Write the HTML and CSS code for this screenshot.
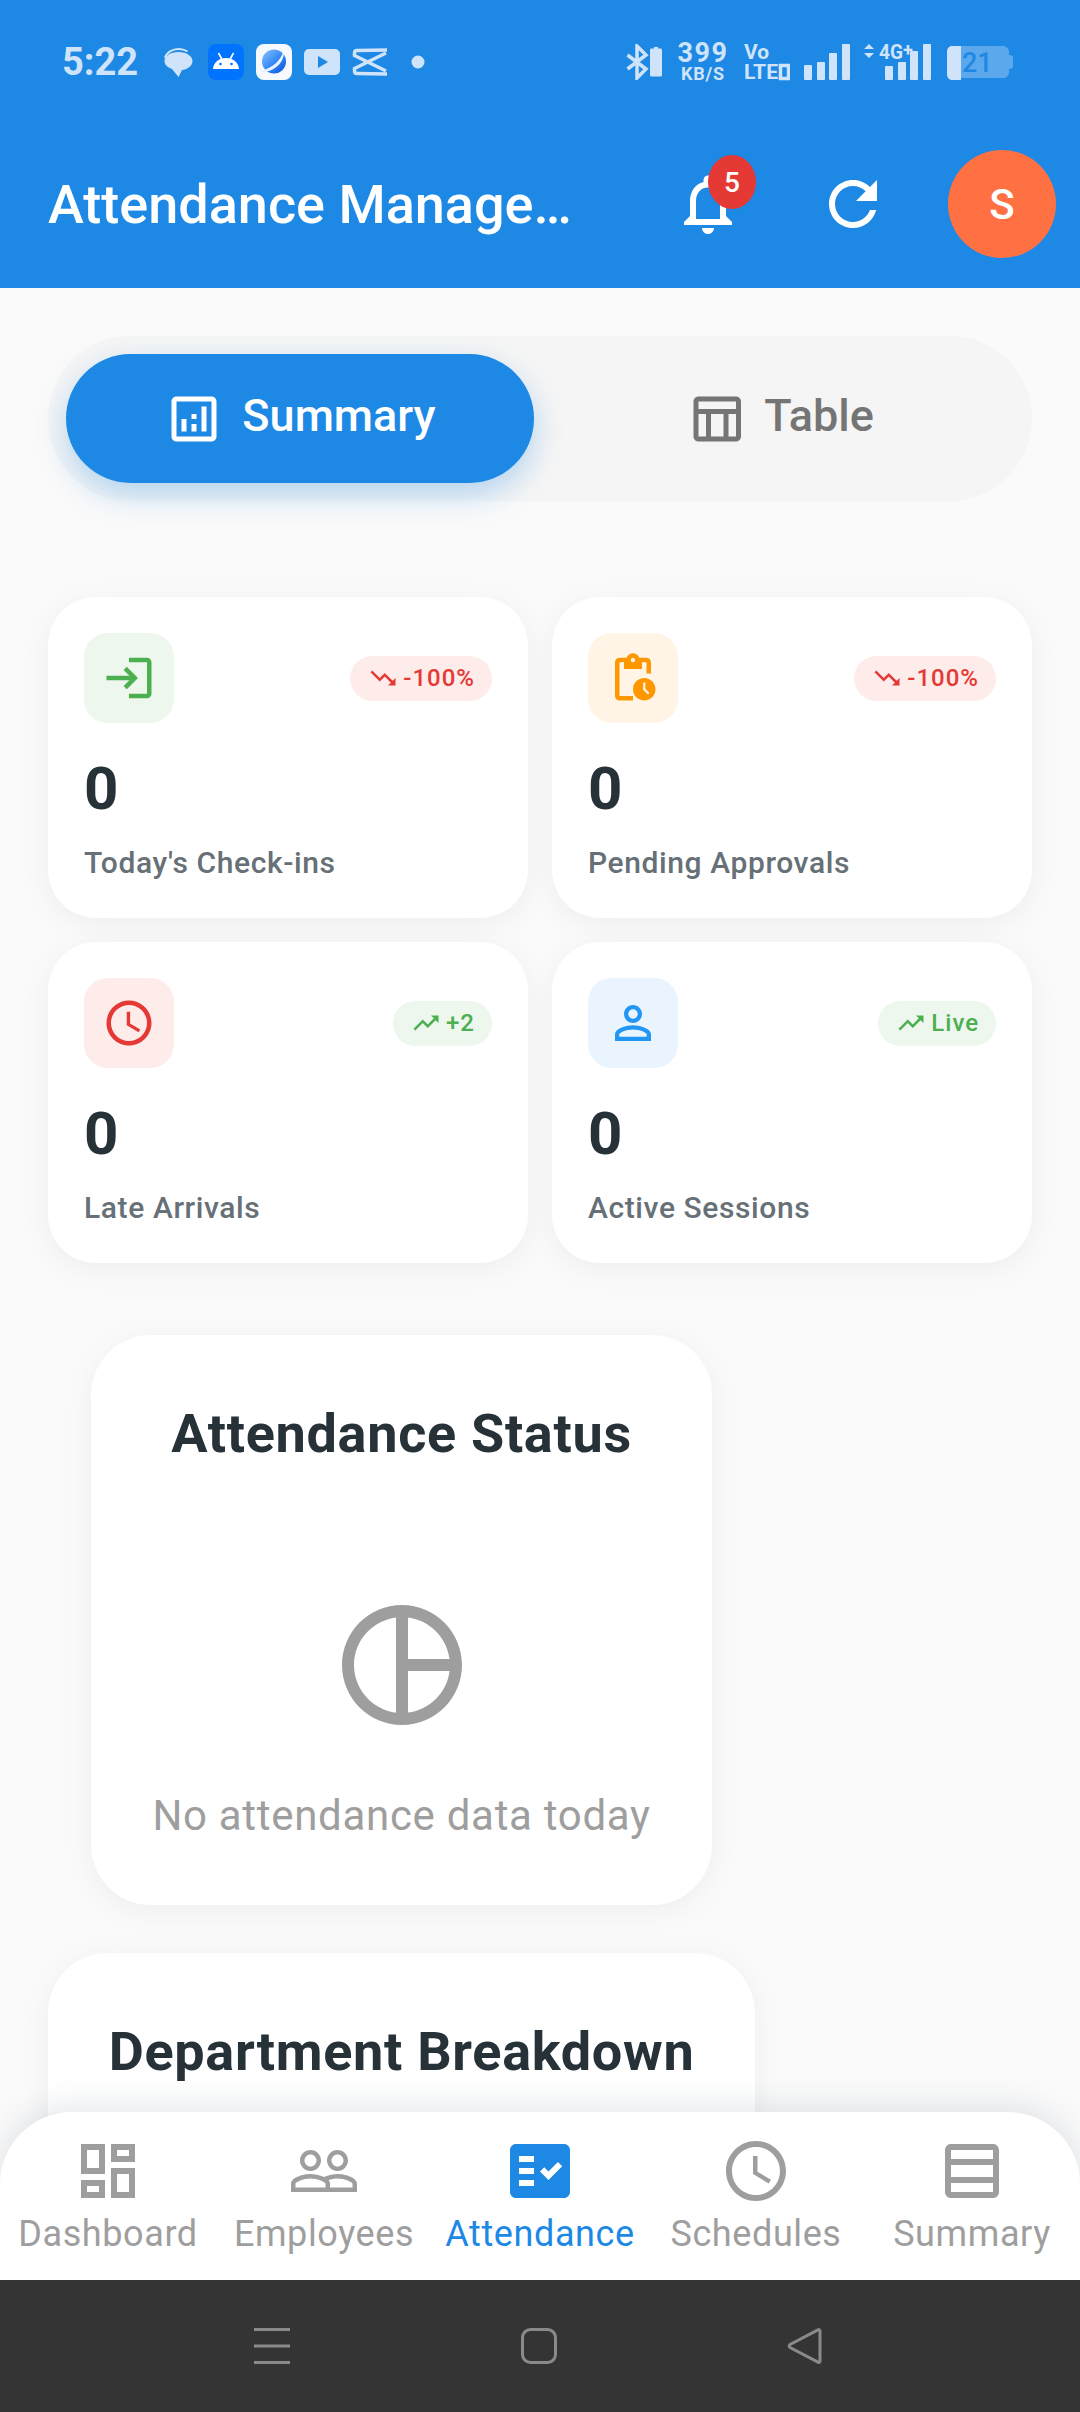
FILE: index.html
```html
<!DOCTYPE html>
<html lang="en">
<head>
<meta name="viewport" content="width=device-width, initial-scale=1">
<title>Attendance Management</title>
<link rel="stylesheet" href="styles.css">
</head>
<body>
<div class="screen">

<header class="app-header">
    <div class="status-bar">
        <div class="status-left">
            <span class="status-time">5:22</span>
            <svg class="status-icon" viewBox="0 0 36 36"><path class="tint" d="M18.500 8C26.500 8 32.500 12 32.500 17c0 4.500-4.500 8.500-10.500 9l-3.500 7-6.500-8C7.500 23.500 4.500 20.500 4.500 17c0-5 6-9 14-9z"/><path class="tint-line" d="M5 14C6.500 8.500 12.500 5 18.500 5c3.500 0 6.500.8 9 2.500"/></svg>
            <svg class="status-icon" viewBox="0 0 36 36"><rect width="36" height="36" rx="8" fill="#0073ff"/><path fill="#fff" d="M5 25c.4-6.500 6-11 13-11S30.600 18.500 31 25z"/><path stroke="#fff" stroke-width="1.600" d="M10.500 9l3.500 6.500M25.500 9L22 15.500"/><circle cx="12.500" cy="20" r="1.300" fill="#0073ff"/><circle cx="23.500" cy="20" r="1.300" fill="#0073ff"/></svg>
            <svg class="status-icon" viewBox="0 0 36 36"><defs><linearGradient id="orb" x1="0" y1="0" x2="1" y2="1"><stop offset="0" stop-color="#8cc2fc"/><stop offset=".55" stop-color="#2f86f5"/><stop offset="1" stop-color="#0b4fd8"/></linearGradient></defs><rect width="36" height="36" rx="8" fill="#f6faff"/><circle cx="18" cy="17.500" r="12" fill="url(#orb)"/><path fill="#eaf3fd" d="M27 8C25 16 17 23.500 6 26.500l-1 1.500c11 .5 22-7 23-19z"/></svg>
            <svg class="status-icon" viewBox="0 0 36 36"><rect y="5" width="36" height="26" rx="5" class="tint"/><path fill="#1e88e5" d="M14 12l10 6-10 6z"/></svg>
            <svg class="status-icon" viewBox="0 0 36 36"><path class="tint-line thick" d="M35 6L5 6.500C3.500 6.500 2.500 7.500 2.500 9v2.500L34 27"/><path class="tint-line thick" d="M35 30L5 29.500C3.500 29.500 2.500 28.500 2.500 27v-2.500L34 9"/></svg>
            <svg class="status-icon" viewBox="0 0 36 36"><circle class="tint" cx="18" cy="18" r="6.500"/></svg>
        </div>
        <div class="status-right">
            <svg class="status-bt" viewBox="0 0 36 36"><path class="tint-line bt-line" d="M1.500 11L20 25l-9 9V2l9 9L1.500 25"/><path class="tint" d="M24 6c0-.8.6-1.500 1.500-1.500H28V3h4v1.500h2.500c.9 0 1.500.7 1.500 1.500v25c0 .8-.6 1.500-1.500 1.500h-9c-.9 0-1.500-.7-1.500-1.500z"/></svg>
            <div class="status-speed">
                <span class="speed-value">399</span>
                <span class="speed-unit">KB/S</span>
            </div>
            <svg class="status-lte" viewBox="0 -6 46 48"><text class="sb-text" x="0" y="15" font-size="21">Vo</text><text class="sb-text" x="0" y="35" font-size="20" textLength="34" lengthAdjust="spacingAndGlyphs">LTE</text><rect class="tint-line thick" x="36.500" y="21.500" width="8" height="13"/></svg>
            <svg class="status-signal" viewBox="0 0 46 36"><rect class="tint" y="21" width="8" height="15" rx="1"/><rect class="tint" x="13" y="18" width="8" height="18" rx="1"/><rect class="tint" x="25" y="9" width="8" height="27" rx="1"/><rect class="tint" x="38" width="8" height="36" rx="1"/></svg>
            <svg class="status-signal2" viewBox="0 -6 68 48"><path class="tint" d="M5 0l5 5H0zM5 14l5-5H0z"/><text class="sb-text" x="15" y="15" font-size="20" textLength="24" lengthAdjust="spacingAndGlyphs">4G</text><text class="sb-text" x="39" y="12" font-size="18">+</text><rect class="tint" x="21" y="22" width="8" height="14" rx="1"/><rect class="tint" x="34" y="18" width="8" height="18" rx="1"/><rect class="tint" x="46" y="7" width="8" height="29" rx="1"/><rect class="tint" x="59" width="8" height="36" rx="1"/></svg>
            <svg class="status-battery" viewBox="0 0 67 36"><path fill="#cfe4fa" fill-opacity=".35" d="M6 2h51c3 0 6 2.500 6 6v3c2.500 0 4 .8 4 2.500v9c0 1.700-1.500 2.500-4 2.500v3c0 4-3 6-6 6H6z"/><path class="tint" d="M15 2H6C3 2 1 4.500 1 8v22c0 3.500 2 6 5 6h9z"/><text class="sb-text batt-text" x="16" y="28" font-size="27">21</text></svg>
        </div>
    </div>
    <div class="toolbar">
        <h1 class="app-title">Attendance Manage…</h1>
        <div class="bell-wrap">
            <svg class="toolbar-icon" viewBox="0 0 24 24"><path fill="#fff" d="M12 22c1.100 0 2-.9 2-2h-4c0 1.100.9 2 2 2zm6-6v-5c0-3.070-1.630-5.640-4.500-6.320V4c0-.83-.67-1.500-1.500-1.500s-1.500.67-1.500 1.500v.68C7.640 5.360 6 7.920 6 11v5l-2 2v1h16v-1l-2-2zm-2 1H8v-6c0-2.480 1.510-4.500 4-4.500s4 2.020 4 4.500v6z"/></svg>
            <span class="bell-badge">5</span>
        </div>
        <svg class="toolbar-icon refresh-icon" viewBox="0 0 24 24"><path fill="#fff" d="M17.650 6.350C16.200 4.900 14.210 4 12 4c-4.420 0-7.990 3.580-7.990 8s3.570 8 7.990 8c3.730 0 6.840-2.550 7.730-6h-2.080c-.82 2.330-3.040 4-5.650 4-3.310 0-6-2.690-6-6s2.690-6 6-6c1.660 0 3.140.69 4.220 1.780L13 11h7V4l-2.350 2.350z"/></svg>
        <div class="avatar">S</div>
    </div>
</header>

<div class="screen-body">
    <main class="content">
        <div class="view-toggle">
            <div class="toggle-tab active">
                <svg class="toggle-icon" viewBox="0 0 24 24"><path d="M19 3H5c-1.100 0-2 .9-2 2v14c0 1.100.9 2 2 2h14c1.100 0 2-.9 2-2V5c0-1.100-.9-2-2-2zm0 16H5V5h14v14zM7 12h2v5H7zM15 7h2v10h-2zM11 14h2v3h-2zM11 10h2v2h-2z"/></svg>
                <span>Summary</span>
            </div>
            <div class="toggle-tab">
                <svg class="toggle-icon" viewBox="0 0 24 24"><path d="M20 3H5c-1.100 0-2 .9-2 2v14c0 1.100.9 2 2 2h15c1.100 0 2-.9 2-2V5c0-1.100-.9-2-2-2zm0 2v3H5V5h15zm-5 14h-5v-9h5v9zM5 10h3v9H5v-9zm12 9v-9h3v9h-3z"/></svg>
                <span>Table</span>
            </div>
        </div>

        <section class="stat-grid">
            <div class="stat-card">
                <div class="stat-top">
                    <div class="stat-icon green"><svg viewBox="0 0 24 24"><path d="M11 7L9.600 8.400l2.600 2.600H2v2h10.200l-2.600 2.600L11 17l5-5-5-5zm9 12h-8v2h8c1.100 0 2-.9 2-2V5c0-1.100-.9-2-2-2h-8v2h8v14z"/></svg></div>
                    <div class="trend red">
                        <svg viewBox="0 0 24 24"><path d="M16 18l2.290-2.290-4.880-4.880-4 4L2 7.410 3.410 6l6 6 4-4 6.300 6.290L22 12v6z"/></svg>
                        <span>-100%</span>
                    </div>
                </div>
                <div class="stat-value">0</div>
                <div class="stat-label">Today's Check-ins</div>
            </div>
            <div class="stat-card">
                <div class="stat-top">
                    <div class="stat-icon orange"><svg viewBox="0 0 24 24"><path d="M17 12c-2.760 0-5 2.240-5 5s2.240 5 5 5 5-2.240 5-5-2.240-5-5-5zm1.650 7.350L16.500 17.200V14h1v2.790l1.850 1.850-.7.71zM18 3h-3.180C14.400 1.840 13.300 1 12 1s-2.400.84-2.820 2H6c-1.100 0-2 .9-2 2v15c0 1.100.9 2 2 2h6v-2H6V5h2v3h8V5h2v5h2V5c0-1.100-.9-2-2-2zm-6 2c-.55 0-1-.45-1-1s.45-1 1-1 1 .45 1 1-.45 1-1 1z"/></svg></div>
                    <div class="trend red">
                        <svg viewBox="0 0 24 24"><path d="M16 18l2.290-2.290-4.880-4.880-4 4L2 7.410 3.410 6l6 6 4-4 6.300 6.290L22 12v6z"/></svg>
                        <span>-100%</span>
                    </div>
                </div>
                <div class="stat-value">0</div>
                <div class="stat-label">Pending Approvals</div>
            </div>
            <div class="stat-card">
                <div class="stat-top">
                    <div class="stat-icon red"><svg viewBox="0 0 24 24"><path d="M11.990 2C6.470 2 2 6.480 2 12s4.470 10 9.990 10C17.520 22 22 17.520 22 12S17.520 2 11.990 2zM12 20c-4.420 0-8-3.580-8-8s3.580-8 8-8 8 3.580 8 8-3.580 8-8 8zm.5-13H11v6l5.250 3.150.75-1.230-4.500-2.670z"/></svg></div>
                    <div class="trend green">
                        <svg viewBox="0 0 24 24"><path d="M16 6l2.290 2.290-4.880 4.880-4-4L2 16.590 3.410 18l6-6 4 4 6.300-6.290L22 12V6z"/></svg>
                        <span>+2</span>
                    </div>
                </div>
                <div class="stat-value">0</div>
                <div class="stat-label">Late Arrivals</div>
            </div>
            <div class="stat-card">
                <div class="stat-top">
                    <div class="stat-icon blue"><svg viewBox="0 0 24 24"><path d="M12 5.900c1.160 0 2.100.94 2.100 2.100s-.94 2.100-2.100 2.100S9.900 9.160 9.900 8s.94-2.100 2.100-2.100m0 9c2.970 0 6.100 1.460 6.100 2.100v1.100H5.900V17c0-.64 3.130-2.100 6.100-2.100M12 4C9.790 4 8 5.790 8 8s1.790 4 4 4 4-1.790 4-4-1.790-4-4-4zm0 9c-2.670 0-8 1.340-8 4v3h16v-3c0-2.660-5.330-4-8-4z"/></svg></div>
                    <div class="trend green">
                        <svg viewBox="0 0 24 24"><path d="M16 6l2.290 2.290-4.880 4.880-4-4L2 16.590 3.410 18l6-6 4 4 6.300-6.290L22 12V6z"/></svg>
                        <span>Live</span>
                    </div>
                </div>
                <div class="stat-value">0</div>
                <div class="stat-label">Active Sessions</div>
            </div>
        </section>

        <section class="chart-column">
            <div class="chart-card">
                <h2 class="chart-title">Attendance Status</h2>
                <svg class="empty-icon" viewBox="0 0 24 24"><path d="M12 2C6.490 2 2 6.490 2 12s4.490 10 10 10 10-4.490 10-10S17.510 2 12 2zm1 2.070c3.610.45 6.480 3.330 6.930 6.930H13V4.070zM4 12c0-4.060 3.070-7.440 7-7.930v15.870c-3.930-.5-7-3.880-7-7.940zm9 7.930V13h6.930c-.45 3.610-3.320 6.480-6.930 6.930z"/></svg>
                <p class="empty-text">No attendance data today</p>
            </div>
            <div class="chart-card">
                <h2 class="chart-title">Department Breakdown</h2>
            </div>
        </section>
    </main>

    <nav class="bottom-nav">
        <div class="nav-item">
            <svg viewBox="0 0 24 24"><path d="M19 5v2h-4V5h4M9 5v6H5V5h4m10 8v6h-4v-6h4M9 17v2H5v-2h4M21 3h-8v6h8V3zM11 3H3v10h8V3zm10 8h-8v10h8V11zm-10 4H3v6h8v-6z"/></svg>
            <span>Dashboard</span>
        </div>
        <div class="nav-item">
            <svg viewBox="0 0 24 24"><path d="M16.500 13c-1.200 0-3.070.34-4.500 1-1.430-.67-3.300-1-4.500-1C5.330 13 1 14.080 1 16.250V19h22v-2.750c0-2.170-4.330-3.250-6.500-3.250zm-4 4.500h-10v-1.250c0-.54 2.560-1.750 5-1.750s5 1.210 5 1.750v1.250zm9 0H14v-1.250c0-.46-.2-.86-.52-1.220.88-.3 1.960-.53 3.020-.53 2.440 0 5 1.210 5 1.750v1.250zM7.500 12c1.930 0 3.500-1.570 3.500-3.500S9.430 5 7.500 5 4 6.570 4 8.500 5.570 12 7.500 12zm0-5.500c1.100 0 2 .9 2 2s-.9 2-2 2-2-.9-2-2 .9-2 2-2zm9 5.500c1.930 0 3.500-1.570 3.500-3.500S18.430 5 16.500 5 13 6.570 13 8.500s1.570 3.500 3.500 3.500zm0-5.500c1.100 0 2 .9 2 2s-.9 2-2 2-2-.9-2-2 .9-2 2-2z"/></svg>
            <span>Employees</span>
        </div>
        <div class="nav-item active">
            <svg viewBox="0 0 24 24"><path d="M20 3H4c-1.100 0-2 .9-2 2v14c0 1.100.9 2 2 2h16c1.100 0 2-.9 2-2V5c0-1.100-.9-2-2-2zM10 17H5v-2h5v2zm0-4H5v-2h5v2zm0-4H5V7h5v2zm4.820 6L12 12.160l1.410-1.410 1.410 1.420L17.990 9l1.420 1.420L14.820 15z"/></svg>
            <span>Attendance</span>
        </div>
        <div class="nav-item">
            <svg viewBox="0 0 24 24"><path d="M11.990 2C6.470 2 2 6.480 2 12s4.470 10 9.990 10C17.520 22 22 17.520 22 12S17.520 2 11.990 2zM12 20c-4.420 0-8-3.580-8-8s3.580-8 8-8 8 3.580 8 8-3.580 8-8 8zm.5-13H11v6l5.250 3.150.75-1.230-4.500-2.670z"/></svg>
            <span>Schedules</span>
        </div>
        <div class="nav-item">
            <svg viewBox="0 0 24 24"><path d="M19 3H5c-1.100 0-2 .9-2 2v14c0 1.100.9 2 2 2h14c1.100 0 2-.9 2-2V5c0-1.100-.9-2-2-2zm0 2v3H5V5h14zm0 5v4H5v-4h14zM5 19v-3h14v3H5z"/></svg>
            <span>Summary</span>
        </div>
    </nav>
</div>

<div class="system-bar">
    <svg viewBox="0 0 36 36"><path d="M0 1.500h36M0 18h36M0 34.500h36"/></svg>
    <svg viewBox="0 0 36 36"><rect x="1.500" y="1.500" width="33" height="33" rx="8"/></svg>
    <svg viewBox="0 0 36 36"><path stroke-linejoin="round" d="M33 2.500c-.5-.8-1.300-1-2-.6L3 16.500c-1.200.7-1.200 2.300 0 3l28 14.600c.7.4 1.500.2 2-.6z"/></svg>
</div>

</div>
</body>
</html>
```

FILE: styles.css
```css
* {
    box-sizing: border-box;
}
html, body {
    margin: 0;
    padding: 0;
}
body {
    background-color: #fafafa;
    color: #263238;
    font-family: Roboto, "Noto Sans", sans-serif;
}
.screen {
    width: 1080px;
    height: 2412px;
    display: flex;
    flex-direction: column;
    overflow: hidden;
}

/* header and status bar */
.app-header {
    height: 288px;
    background-color: #1e88e5;
    flex-shrink: 0;
}
.status-bar {
    height: 120px;
    display: flex;
    align-items: center;
    justify-content: space-between;
    padding: 4px 67px 0 62px;
}
.status-left {
    display: flex;
    align-items: center;
    gap: 12px;
}
.status-right {
    display: flex;
    align-items: center;
    gap: 14px;
}
.status-time {
    font-size: 38px;
    font-weight: 700;
    color: #cfe4fa;
    width: 86px;
}
.status-icon {
    width: 36px;
    height: 36px;
}
.tint {
    fill: #cfe4fa;
}
.tint-line {
    fill: none;
    stroke: #cfe4fa;
    stroke-width: 2;
}
.tint-line.thick {
    stroke-width: 3.500;
}
.tint-line.bt-line {
    stroke-width: 3.500;
}
.status-bt {
    width: 36px;
    height: 36px;
}
.status-speed {
    width: 54px;
    height: 44px;
    display: flex;
    flex-direction: column;
    align-items: center;
    color: #cfe4fa;
    font-weight: 700;
}
.speed-value {
    font-size: 27px;
    line-height: 26px;
    letter-spacing: 1.500px;
}
.speed-unit {
    font-size: 18px;
    line-height: 15px;
    letter-spacing: 0.800px;
}
.status-lte {
    width: 46px;
    height: 48px;
}
.status-signal {
    width: 46px;
    height: 36px;
}
.status-signal2 {
    width: 68px;
    height: 48px;
}
.status-battery {
    width: 67px;
    height: 36px;
}
.sb-text {
    fill: #cfe4fa;
    font-family: Roboto, sans-serif;
    font-weight: 700;
}
.batt-text {
    fill: #1e88e5;
    font-weight: 500;
}
.toolbar {
    height: 168px;
    display: flex;
    align-items: center;
    padding: 0 24px 0 48px;
}
.app-title {
    flex: 1;
    margin: 0;
    font-size: 54px;
    font-weight: 500;
    color: white;
    white-space: nowrap;
}
.toolbar-icon {
    width: 72px;
    height: 72px;
    display: block;
}
.bell-wrap {
    position: relative;
    width: 72px;
    height: 72px;
}
.bell-badge {
    position: absolute;
    left: 36px;
    top: -13px;
    width: 48px;
    height: 54px;
    border-radius: 50%;
    background-color: #e53935;
    color: white;
    font-size: 28px;
    font-weight: 500;
    display: flex;
    align-items: center;
    justify-content: center;
}
.refresh-icon {
    margin-left: 73px;
}
.avatar {
    width: 108px;
    height: 108px;
    margin-left: 59px;
    border-radius: 50%;
    background-color: #ff7043;
    color: white;
    font-size: 42px;
    font-weight: 500;
    display: flex;
    align-items: center;
    justify-content: center;
}

/* main scroll area */
.screen-body {
    flex: 1;
    position: relative;
    overflow: hidden;
}
.content {
    padding: 48px 48px 0;
}
.view-toggle {
    height: 165px;
    display: flex;
    justify-content: space-between;
    padding: 18px;
    background-color: #f5f5f5;
    border-radius: 83px;
}
.toggle-tab {
    width: 468px;
    height: 129px;
    display: flex;
    align-items: center;
    justify-content: center;
    gap: 18px;
    border-radius: 65px;
    color: #757575;
    font-size: 45px;
    font-weight: 500;
}
.toggle-tab span {
    margin-bottom: 6px;
}
.toggle-tab.active {
    background-color: #1e88e5;
    color: white;
    box-shadow: 0 12px 30px rgba(30, 136, 229, 0.3);
}
.toggle-icon {
    width: 60px;
    height: 60px;
    fill: currentColor;
}

.stat-grid {
    margin-top: 96px;
    display: grid;
    grid-template-columns: 480px 480px;
    grid-auto-rows: 321px;
    gap: 24px;
}
.stat-card {
    background-color: white;
    border-radius: 48px;
    padding: 36px;
    box-shadow: 0 6px 30px rgba(0, 0, 0, 0.05);
}
.stat-top {
    display: flex;
    align-items: center;
    justify-content: space-between;
}
.stat-icon {
    width: 90px;
    height: 90px;
    padding: 18px;
    border-radius: 24px;
}
.stat-icon svg {
    display: block;
    width: 54px;
    height: 54px;
    fill: currentColor;
}
.green {
    color: #4caf50;
    background-color: #edf7ee;
}
.orange {
    color: #ff9800;
    background-color: #fff4e5;
}
.red {
    color: #e53935;
    background-color: #fdecea;
}
.blue {
    color: #2196f3;
    background-color: #e9f4fe;
}
.trend {
    height: 45px;
    display: flex;
    align-items: center;
    gap: 5px;
    padding: 0 17px 0 18px;
    border-radius: 23px;
    font-size: 24px;
    font-weight: 500;
    letter-spacing: 1px;
}
.trend svg {
    width: 30px;
    height: 30px;
    fill: currentColor;
}
.stat-value {
    margin-top: 30px;
    font-size: 60px;
    font-weight: 700;
    line-height: 72px;
}
.stat-label {
    margin-top: 17px;
    font-size: 30px;
    font-weight: 500;
    line-height: 42px;
    color: #667076;
    letter-spacing: 0.600px;
}

.chart-column {
    width: 707px;
    margin-top: 72px;
    display: flex;
    flex-direction: column;
    align-items: center;
    gap: 48px;
}
.chart-card {
    height: 570px;
    padding: 67px 61px 0;
    background-color: white;
    border-radius: 60px;
    box-shadow: 0 6px 30px rgba(0, 0, 0, 0.05);
    display: flex;
    flex-direction: column;
    align-items: center;
}
.chart-title {
    margin: 0;
    font-size: 54px;
    font-weight: 700;
    line-height: 64px;
    letter-spacing: 0.700px;
    white-space: nowrap;
}
.empty-icon {
    width: 144px;
    height: 144px;
    margin-top: 127px;
    fill: #9e9e9e;
}
.empty-text {
    margin: 54px 0 0;
    font-size: 42px;
    line-height: 50px;
    color: #9e9e9e;
    letter-spacing: 0.700px;
    white-space: nowrap;
}

/* bottom navigation sits over the scroll area */
.bottom-nav {
    position: absolute;
    left: 0;
    right: 0;
    bottom: 0;
    height: 168px;
    display: grid;
    grid-template-columns: repeat(5, 216px);
    padding-top: 23px;
    background-color: white;
    border-radius: 72px 72px 0 0;
    box-shadow: 0 -6px 30px rgba(30, 60, 90, 0.12);
}
.nav-item {
    display: flex;
    flex-direction: column;
    align-items: center;
    color: #9e9e9e;
    font-size: 36px;
    letter-spacing: 0.600px;
    line-height: 42px;
}
.nav-item svg {
    width: 72px;
    height: 72px;
    fill: currentColor;
}
.nav-item span {
    margin-top: 6px;
}
.nav-item.active {
    color: #1e88e5;
}

.system-bar {
    height: 132px;
    flex-shrink: 0;
    background-color: #343434;
    display: flex;
    align-items: flex-start;
    padding: 48px 257px 0 254px;
    justify-content: space-between;
}
.system-bar svg {
    width: 36px;
    height: 36px;
    fill: none;
    stroke: #8a8a8a;
    stroke-width: 3;
}
```
